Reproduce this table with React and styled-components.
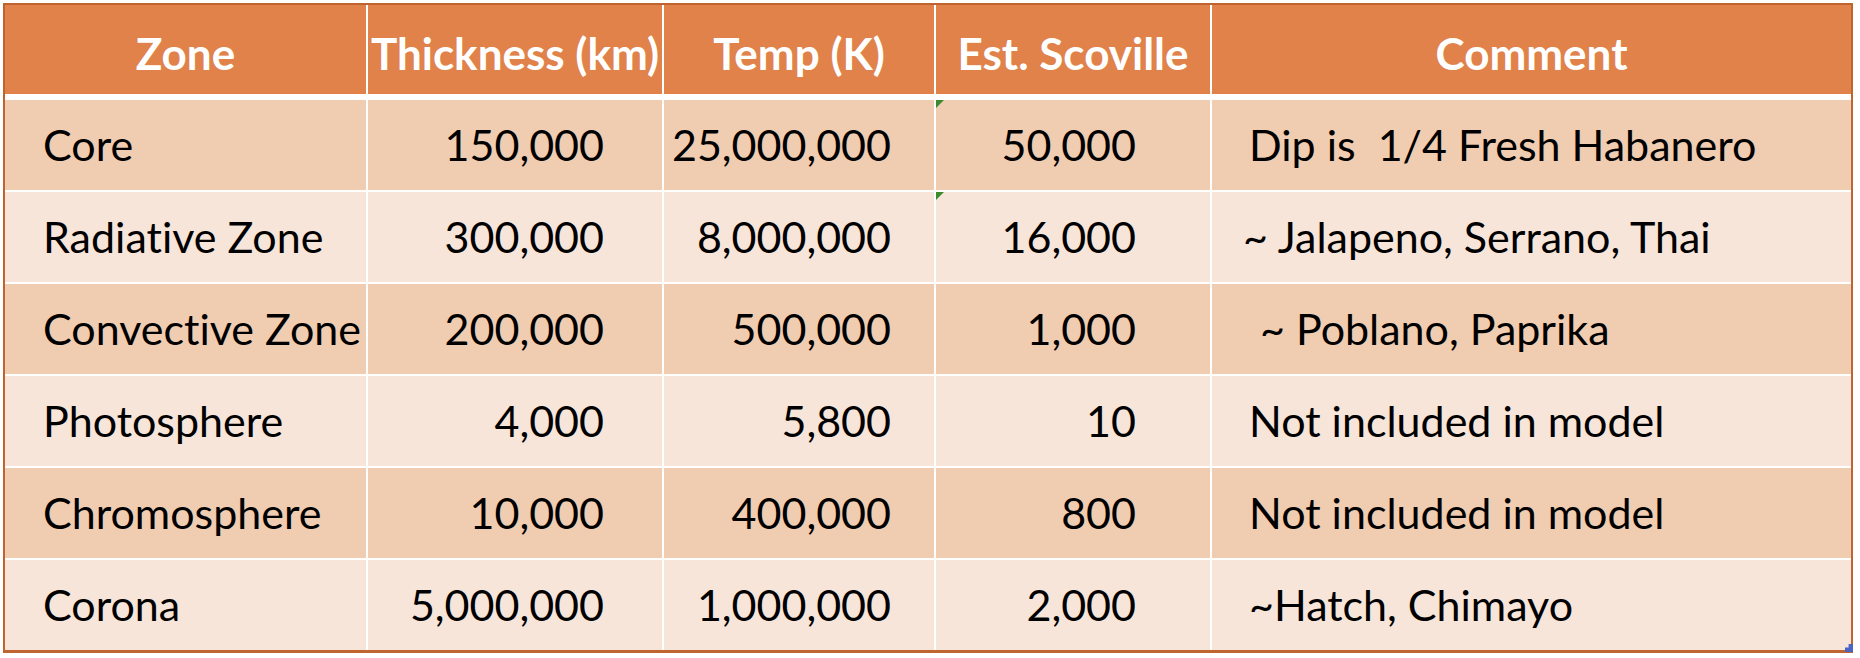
import React from "react";
import styled, { createGlobalStyle } from "styled-components";

const COLORS = {
  header: "#E0824A",
  dark: "#F0CCB1",
  light: "#F7E5D9",
  border: "#BF642E",
  grid: "#FFFFFF",
};

const columns = [
  { title: "Zone", align: "left", pad: 38 },
  { title: "Thickness (km)", align: "right", pad: 58 },
  { title: "Temp (K)", align: "right", pad: 43 },
  { title: "Est. Scoville", align: "right", pad: 74 },
  { title: "Comment", align: "left", pad: 37 },
];

const rows = [
  ["Core", "150,000", "25,000,000", "50,000", "Dip is  1/4 Fresh Habanero"],
  ["Radiative Zone", "300,000", "8,000,000", "16,000", "~ Jalapeno, Serrano, Thai"],
  ["Convective Zone", "200,000", "500,000", "1,000", " ~ Poblano, Paprika"],
  ["Photosphere", "4,000", "5,800", "10", "Not included in model"],
  ["Chromosphere", "10,000", "400,000", "800", "Not included in model"],
  ["Corona", "5,000,000", "1,000,000", "2,000", "~Hatch, Chimayo"],
];

// cells that show Excel's little green "number stored as text" flag
const flagged = { "0-3": true, "1-3": true };

const GlobalStyle = createGlobalStyle`
  html, body {
    margin: 0;
    padding: 0;
    background: #ffffff;
  }
  body {
    font-family: Lato, "Open Sans", sans-serif;
    font-variant-ligatures: none;
  }
`;

const App = () => {
  return (
    <Page>
      <GlobalStyle />
      <Table>
        <HeaderRow>
          {columns.map((c) => (
            <HeadCell key={c.title}>{c.title}</HeadCell>
          ))}
        </HeaderRow>
        {rows.map((row, i) => (
          <Row key={row[0]}>
            {row.map((value, j) => (
              <Cell
                key={j}
                $shade={i % 2 === 0 ? COLORS.dark : COLORS.light}
                $align={columns[j].align}
                $pad={j === 4 && i === 1 ? columns[j].pad - 6 : columns[j].pad}
              >
                {flagged[`${i}-${j}`] && <Flag />}
                {value}
              </Cell>
            ))}
          </Row>
        ))}
        <Handle />
      </Table>
    </Page>
  );
};

const Page = styled.div`
  padding: 3px 0 0 3px;
  width: 1860px;
  height: 658px;
  box-sizing: border-box;
`;

const Table = styled.div`
  position: relative;
  width: 1850px;
  box-sizing: border-box;
  display: flex;
  flex-direction: column;
  gap: 2px;
  background: ${COLORS.grid};
  border-top: 2px solid ${COLORS.border};
  border-left: 2px solid ${COLORS.border};
  border-right: 2px solid ${COLORS.border};
  border-bottom: 3px solid ${COLORS.border};
`;

const Row = styled.div`
  display: grid;
  grid-template-columns: 361px 294px 270px 274px 1fr;
  column-gap: 2px;
  height: 90px;
`;

const HeaderRow = styled(Row)`
  height: 89px;
  margin-bottom: 4px;
`;

const HeadCell = styled.div`
  display: flex;
  align-items: center;
  justify-content: center;
  padding-top: 6px;
  box-sizing: border-box;
  background: ${COLORS.header};
  color: #ffffff;
  font-weight: 700;
  font-size: 44px;
  white-space: nowrap;
  overflow: hidden;
`;

const Cell = styled.div`
  position: relative;
  display: flex;
  align-items: center;
  justify-content: ${(p) => (p.$align === "right" ? "flex-end" : "flex-start")};
  padding-bottom: 2px;
  padding-left: ${(p) => (p.$align === "left" ? p.$pad : 0)}px;
  padding-right: ${(p) => (p.$align === "right" ? p.$pad : 0)}px;
  box-sizing: border-box;
  background: ${(p) => p.$shade};
  color: #000000;
  font-size: 43px;
  white-space: pre;
`;

const Flag = styled.span`
  position: absolute;
  top: 0;
  left: 0;
  width: 0;
  height: 0;
  border-top: 8px solid #3C8A2E;
  border-right: 8px solid transparent;
`;

const Handle = styled.span`
  position: absolute;
  right: -2px;
  bottom: -2px;
  width: 8px;
  height: 8px;
  background: #4B63C4;
  clip-path: polygon(45% 0, 100% 0, 100% 100%, 0 100%, 0 45%, 45% 45%);
`;

export default App;
